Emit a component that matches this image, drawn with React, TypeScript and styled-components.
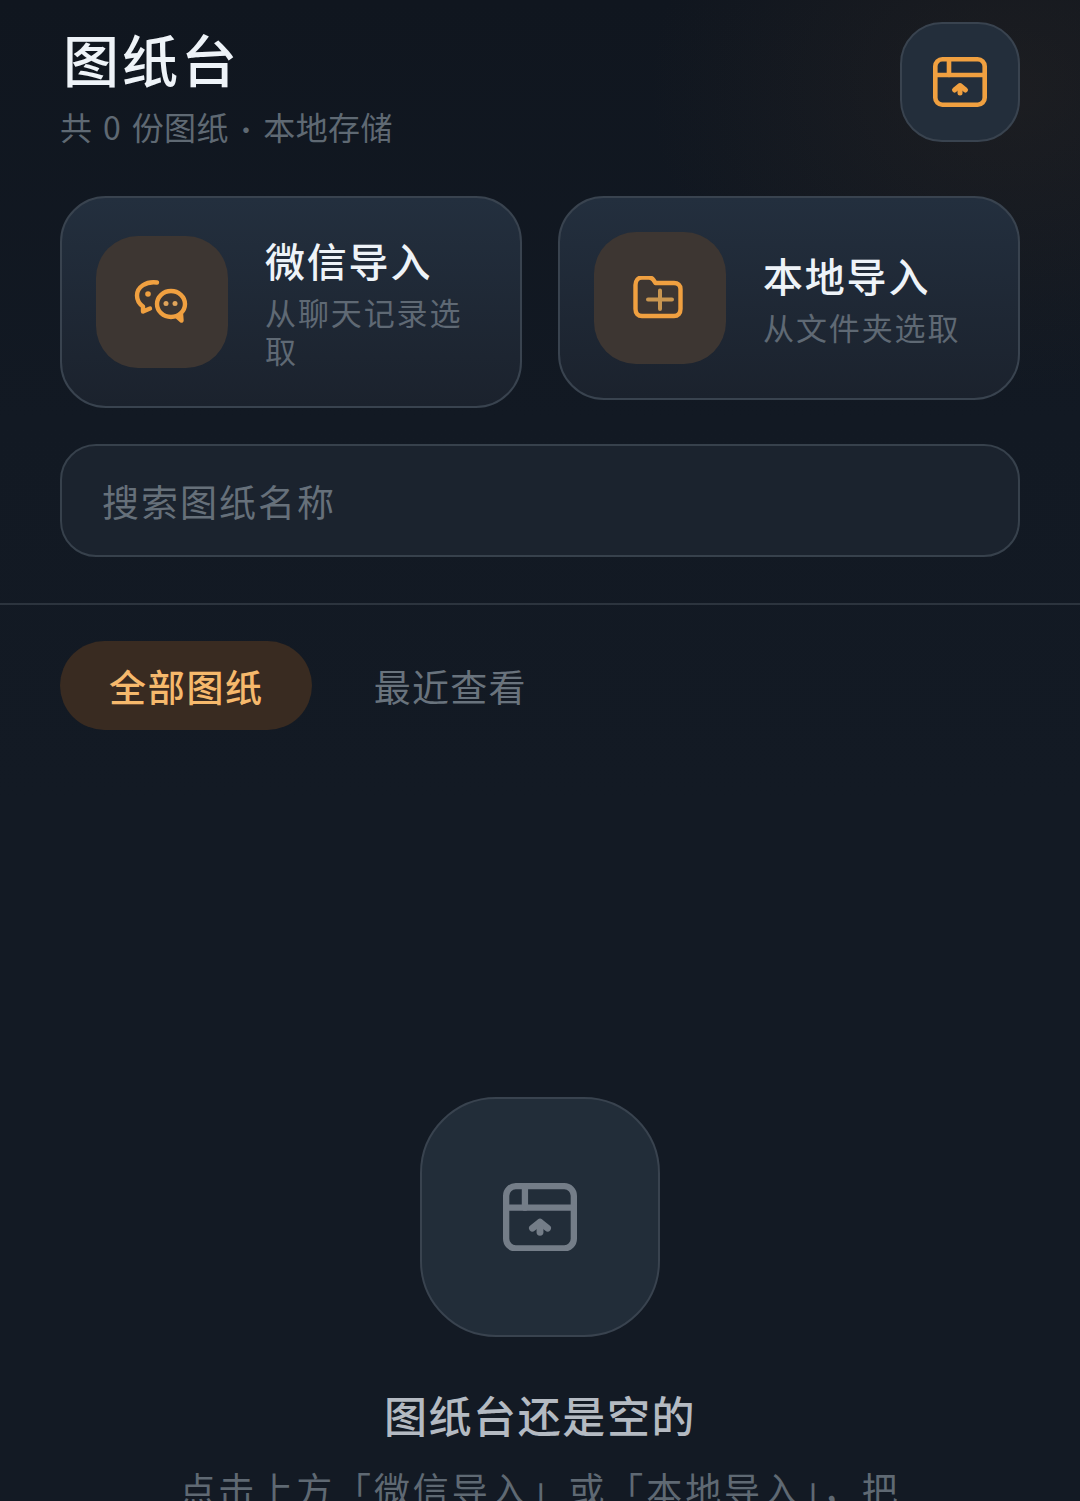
import React from "react";
import styled, { createGlobalStyle } from "styled-components";

const Global = createGlobalStyle`
  html, body { margin: 0; padding: 0; background: #131a24; }
  * { box-sizing: border-box; }
`;

const Page = styled.div`
  width: 1080px;
  height: 1501px;
  overflow: hidden;
  font-family: "Noto Sans CJK SC", "Noto Sans", sans-serif;
  background:
    radial-gradient(360px 300px at 1010px 90px, rgba(58, 46, 36, 0.28), rgba(58, 46, 36, 0) 100%),
    linear-gradient(180deg, #10161f 0px, #121923 420px, #131a24 800px);
`;

const Top = styled.div`
  padding: 22px 60px 0;
`;

const Header = styled.header`
  display: flex;
  justify-content: space-between;
  align-items: flex-start;
`;

const HeaderText = styled.div`
  display: flex;
  flex-direction: column;
`;

const Title = styled.h1`
  margin: -2px 0 0;
  padding-left: 3px;
  font-size: 56px;
  font-weight: 500;
  line-height: 76px;
  letter-spacing: 3px;
  color: #eef3f8;
`;

const Subtitle = styled.div`
  margin-top: 8px;
  font-size: 32px;
  line-height: 44px;
  letter-spacing: 0.4px;
  word-spacing: 3px;
  color: #5f6973;
`;

const Dot = styled.span`
  margin: 0 4px;
  font-size: 26px;
`;

const IconButton = styled.button`
  width: 120px;
  height: 120px;
  padding: 0;
  display: flex;
  align-items: center;
  justify-content: center;
  border-radius: 42px;
  border: 2px solid #39434f;
  background: #232e3b;
`;

const Cards = styled.div`
  margin-top: 45px;
  display: grid;
  grid-template-columns: 462px 462px;
  gap: 36px;
  align-items: start;
`;

const Card = styled.div`
  display: flex;
  align-items: center;
  gap: 37px;
  padding: 34px;
  border-radius: 46px;
  border: 2px solid #39434f;
  background: linear-gradient(180deg, #232f3e 0%, #1b222d 100%);
`;

const IconTile = styled.div`
  flex: none;
  width: 132px;
  height: 132px;
  display: flex;
  align-items: center;
  justify-content: center;
  border-radius: 42px;
  background: #3d3632;
`;

const CardText = styled.div`
  min-width: 0;
  padding: 1px 0 3px;
  display: flex;
  flex-direction: column;
  gap: 6px;
`;

const CardTitle = styled.div`
  font-size: 40px;
  font-weight: 500;
  line-height: 54px;
  letter-spacing: 1.8px;
  color: #eef3f8;
`;

const CardSub = styled.div`
  font-size: 31px;
  line-height: 38px;
  letter-spacing: 1.9px;
  color: #5f6974;
`;

const Search = styled.div`
  margin-top: 36px;
  height: 113px;
  display: flex;
  align-items: center;
  padding: 0 40px;
  border-radius: 36px;
  border: 2px solid #37414c;
  background: #1b232e;
  font-size: 37px;
  letter-spacing: 2px;
  color: #66707a;
`;

const Divider = styled.div`
  margin-top: 46px;
  height: 2px;
  background: #2c343e;
`;

const Tabs = styled.nav`
  margin-top: 36px;
  padding: 0 60px;
  display: flex;
  align-items: center;
  gap: 62px;
`;

const Tab = styled.div<{ $active?: boolean }>`
  display: flex;
  align-items: center;
  height: 89px;
  padding: ${(p) => (p.$active ? "0 48px 0 49px" : "0")};
  border-radius: 45px;
  font-size: 37px;
  letter-spacing: ${(p) => (p.$active ? "1.7px" : "1.2px")};
  font-weight: ${(p) => (p.$active ? 500 : 400)};
  background: ${(p) => (p.$active ? "#392b21" : "transparent")};
  color: ${(p) => (p.$active ? "#f6b96c" : "#69737d")};
`;

const Empty = styled.section`
  margin-top: 367px;
  display: flex;
  flex-direction: column;
  align-items: center;
`;

const EmptyTile = styled.div`
  width: 240px;
  height: 240px;
  display: flex;
  align-items: center;
  justify-content: center;
  border-radius: 76px;
  border: 2px solid #39434f;
  background: #222d39;
`;

const EmptyTitle = styled.div`
  margin-top: 45px;
  font-size: 43px;
  font-weight: 500;
  line-height: 64px;
  letter-spacing: 1.6px;
  color: #b4bac2;
`;

const EmptyBody = styled.div`
  margin-top: 17px;
  width: 760px;
  text-align: center;
  font-size: 36px;
  line-height: 50px;
  letter-spacing: 2.9px;
  color: #5f6973;
`;

const BoardIcon = ({ color, size }: { color: string; size: number }) => (
  <svg width={size} height={(size * 50) / 54} viewBox="0 0 54 50" fill="none" stroke={color} strokeWidth="4.6" strokeLinecap="round" strokeLinejoin="round">
    <rect x="2.300" y="2.300" width="49.400" height="45.400" rx="7" />
    <path d="M2.300 18H51.700" />
    <path d="M16 2.300V18" />
    <path d="M21.500 33L27 28.500L32.500 33" strokeWidth="5" />
    <path d="M27 29V36" strokeWidth="5" />
  </svg>
);

const ChatIcon = () => (
  <svg width="56" height="46" viewBox="0 0 56 46" fill="none" stroke="#f0a040" strokeWidth="4.4" strokeLinecap="round" strokeLinejoin="round">
    <path d="M23 3.500C12 2 3 8 3 16.500C3 21.500 5.500 25 9 27.500L9 32.500L16 29.500" />
    <ellipse cx="37" cy="25" rx="14" ry="13" />
    <path d="M43 37.500L47.500 41.500L47 35" />
    <circle cx="14" cy="15" r="2.800" fill="#f0a040" stroke="none" />
    <circle cx="32" cy="24.500" r="2.500" fill="#e0a45a" stroke="none" />
    <circle cx="41" cy="24.500" r="2.500" fill="#e0a45a" stroke="none" />
  </svg>
);

const FolderIcon = () => (
  <svg width="54" height="44" viewBox="0 1 54 44" fill="none" strokeLinecap="round" strokeLinejoin="round">
    <path d="M2.500 10C2.500 5.500 5 2.500 9 2.500H16C18 2.500 19.500 3.500 20.500 5L22.500 8H41C45 8 47.500 10.500 47.500 14V34C47.500 38.500 45 41 41 41H9C5 41 2.500 38.500 2.500 34Z" stroke="#f0a040" strokeWidth="4.400" />
    <path d="M15 24.500H39M27 15.500V34" stroke="#c99650" strokeWidth="4" />
  </svg>
);

export default function App() {
  return (
    <Page lang="zh-CN">
      <Global />
      <Top>
        <Header>
          <HeaderText>
            <Title>图纸台</Title>
            <Subtitle>
              共 0 份图纸<Dot>·</Dot>本地存储
            </Subtitle>
          </HeaderText>
          <IconButton aria-label="图纸台">
            <BoardIcon color="#f0a040" size={54} />
          </IconButton>
        </Header>
        <Cards>
          <Card>
            <IconTile>
              <ChatIcon />
            </IconTile>
            <CardText>
              <CardTitle>微信导入</CardTitle>
              <CardSub>从聊天记录选取</CardSub>
            </CardText>
          </Card>
          <Card>
            <IconTile>
              <FolderIcon />
            </IconTile>
            <CardText>
              <CardTitle>本地导入</CardTitle>
              <CardSub>从文件夹选取</CardSub>
            </CardText>
          </Card>
        </Cards>
        <Search>搜索图纸名称</Search>
      </Top>
      <Divider />
      <Tabs>
        <Tab $active>全部图纸</Tab>
        <Tab>最近查看</Tab>
      </Tabs>
      <Empty>
        <EmptyTile>
          <BoardIcon color="#747d88" size={74} />
        </EmptyTile>
        <EmptyTitle>图纸台还是空的</EmptyTitle>
        <EmptyBody>点击上方「微信导入」或「本地导入」，把</EmptyBody>
      </Empty>
    </Page>
  );
}
